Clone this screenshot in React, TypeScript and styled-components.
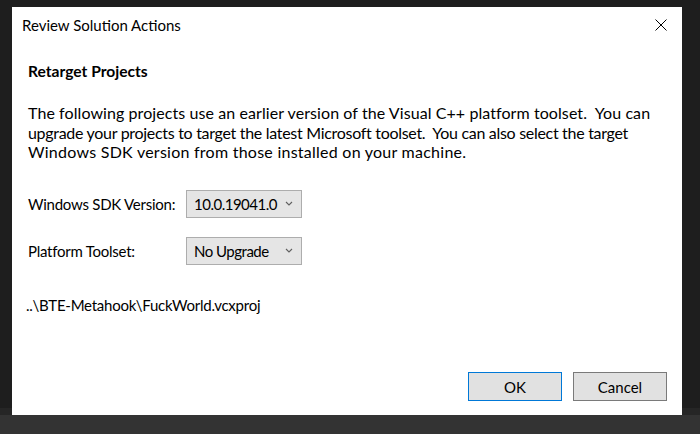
import styled, { createGlobalStyle } from 'styled-components';

const GlobalStyle = createGlobalStyle`
  html, body {
    margin: 0;
    padding: 0;
    background: #1e1e1e;
  }
  body {
    font-family: Lato, "Liberation Sans", sans-serif;
    font-size: 15px;
    color: #000;
  }
`;

const Screen = styled.div`
  width: 700px;
  height: 434px;
  display: flex;
  flex-direction: column;
  overflow: hidden;
`;

const Stage = styled.div`
  flex: 1;
  display: flex;
  padding: 7px 0 0 12px;
  background: linear-gradient(to bottom, #1e1e1e 0, #1e1e1e 408px, #262626 408px);
`;

const BottomBar = styled.div`
  height: 19px;
  background: #333333;
`;

const Dialog = styled.div`
  width: 670px;
  height: 408px;
  background: #ffffff;
  display: flex;
  flex-direction: column;
`;

const TitleBar = styled.div`
  height: 36px;
  display: flex;
  align-items: center;
  padding-left: 10px;
`;

const Title = styled.div`
  flex: 1;
`;

const CloseButton = styled.div`
  width: 42px;
  height: 36px;
  display: flex;
  align-items: center;
  justify-content: center;
`;

const Body = styled.div`
  flex: 1;
  display: flex;
  flex-direction: column;
  padding: 0 15px 14px 16px;
`;

const Heading = styled.div`
  margin-top: 18px;
  font-size: 15.6px;
  font-weight: 700;
  line-height: 20px;
`;

const Paragraph = styled.div`
  margin-top: 22px;
  font-size: 16px;
  line-height: 19.5px;
  white-space: nowrap;
`;

const Line = styled.span<{ $spacing?: number }>`
  display: block;
  letter-spacing: ${(p) => p.$spacing ?? 0}px;
`;

const FormRow = styled.div<{ $top: number }>`
  margin-top: ${(p) => p.$top}px;
  display: flex;
  align-items: center;
`;

const Label = styled.div`
  width: 158px;
  letter-spacing: -0.25px;
`;

const Combo = styled.div`
  width: 116px;
  height: 28px;
  box-sizing: border-box;
  border: 1px solid #adadad;
  background: #e5e5e5;
  display: flex;
  align-items: center;
  padding: 0 8px 0 7px;
`;

const ComboText = styled.span`
  flex: 1;
  letter-spacing: -0.5px;
`;

const PathText = styled.div`
  margin-top: 30px;
  margin-left: -2px;
  line-height: 20px;
  letter-spacing: -0.25px;
`;

const Footer = styled.div`
  margin-top: auto;
  display: flex;
  justify-content: flex-end;
  gap: 11px;
`;

const Button = styled.div<{ $primary?: boolean }>`
  width: 94px;
  height: 29px;
  box-sizing: border-box;
  border: 1px solid ${(p) => (p.$primary ? '#0078d7' : '#7a7a7a')};
  background: #e1e1e1;
  display: flex;
  align-items: center;
  justify-content: center;
`;

function Chevron() {
  return (
    <svg width="8" height="5" viewBox="0 0 8 5">
      <path d="M1 1 L4 4 L7 1" fill="none" stroke="#606060" strokeWidth="1.1" />
    </svg>
  );
}

function CloseIcon() {
  return (
    <svg width="12" height="12" viewBox="0 0 12 12">
      <path d="M0.5 0.5 L11.5 11.5 M11.5 0.5 L0.5 11.5" stroke="#000" strokeWidth="1" />
    </svg>
  );
}

export default function App() {
  return (
    <Screen>
      <GlobalStyle />
      <Stage>
        <Dialog>
          <TitleBar>
            <Title>Review Solution Actions</Title>
            <CloseButton>
              <CloseIcon />
            </CloseButton>
          </TitleBar>
          <Body>
            <Heading>Retarget Projects</Heading>
            <Paragraph>
              <Line $spacing={0.08}>
                The following projects use an earlier version of the Visual C++ platform toolset.&nbsp; You can
              </Line>
              <Line $spacing={-0.3}>
                upgrade your projects to target the latest Microsoft toolset.&nbsp; You can also select the target
              </Line>
              <Line $spacing={0.25}>Windows SDK version from those installed on your machine.</Line>
            </Paragraph>
            <FormRow $top={28}>
              <Label>Windows SDK Version:</Label>
              <Combo>
                <ComboText>10.0.19041.0</ComboText>
                <Chevron />
              </Combo>
            </FormRow>
            <FormRow $top={19}>
              <Label>Platform Toolset:</Label>
              <Combo>
                <ComboText>No Upgrade</ComboText>
                <Chevron />
              </Combo>
            </FormRow>
            <PathText>..\BTE-Metahook\FuckWorld.vcxproj</PathText>
            <Footer>
              <Button $primary>OK</Button>
              <Button>Cancel</Button>
            </Footer>
          </Body>
        </Dialog>
      </Stage>
      <BottomBar />
    </Screen>
  );
}
